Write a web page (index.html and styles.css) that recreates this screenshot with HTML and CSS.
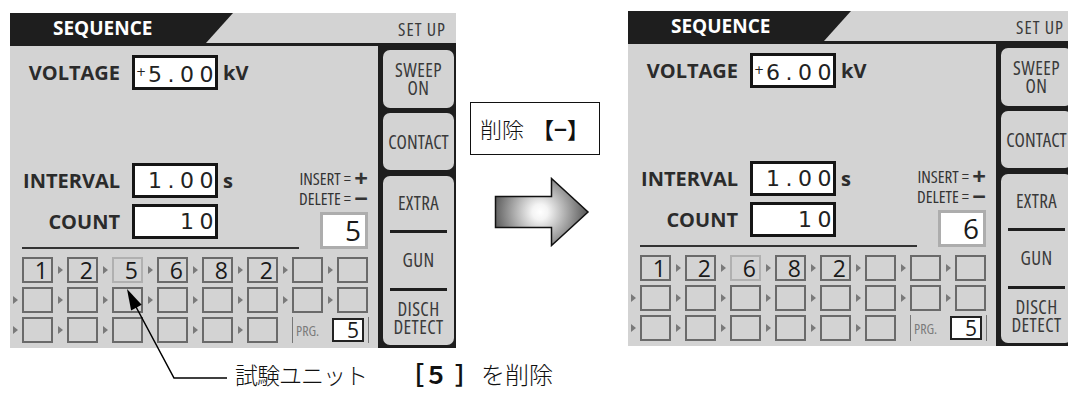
FILE: index.html
```html
<!DOCTYPE html>
<html lang="ja">
<head>
  <meta charset="UTF-8">
  <title>SEQUENCE - 削除</title>
  <link rel="stylesheet" href="styles.css">
</head>
<body>
  <div class="figure">
    <div class="row">

      <!-- Before -->
      <div class="panel">
        <div class="panel-head">
          <div class="tab">SEQUENCE</div>
          <div class="setup">SET UP</div>
        </div>
        <div class="panel-body">
          <div class="main">
            <div class="field">
              <span class="label">VOLTAGE</span>
              <span class="value"><span class="digits"><span class="sign">+</span>5.00</span></span>
              <span class="unit">kV</span>
            </div>
            <div class="middle-block">
              <div class="settings">
                <div class="field">
                  <span class="label">INTERVAL</span>
                  <span class="value"><span class="digits">1.00</span></span>
                  <span class="unit">s</span>
                </div>
                <div class="field">
                  <span class="label">COUNT</span>
                  <span class="value"><span class="digits">10</span></span>
                </div>
              </div>
              <div class="editor">
                <div class="hint">INSERT = <b>+</b></div>
                <div class="hint">DELETE = <b>&minus;</b></div>
                <div class="count">5</div>
              </div>
            </div>
            <div class="steps">
              <div class="step-row">
                <span class="arrow hidden"></span><span class="cell">1</span>
                <span class="arrow"></span><span class="cell">2</span>
                <span class="arrow"></span><span class="cell removed">5</span>
                <span class="arrow"></span><span class="cell">6</span>
                <span class="arrow"></span><span class="cell">8</span>
                <span class="arrow"></span><span class="cell">2</span>
                <span class="arrow"></span><span class="cell"></span>
                <span class="arrow"></span><span class="cell"></span>
              </div>
              <div class="step-row">
                <span class="arrow"></span><span class="cell"></span>
                <span class="arrow"></span><span class="cell"></span>
                <span class="arrow"></span><span class="cell"></span>
                <span class="arrow"></span><span class="cell"></span>
                <span class="arrow"></span><span class="cell"></span>
                <span class="arrow"></span><span class="cell"></span>
                <span class="arrow"></span><span class="cell"></span>
                <span class="arrow"></span><span class="cell"></span>
              </div>
              <div class="step-row">
                <span class="arrow"></span><span class="cell"></span>
                <span class="arrow"></span><span class="cell"></span>
                <span class="arrow"></span><span class="cell"></span>
                <span class="arrow hidden"></span><span class="cell"></span>
                <span class="arrow"></span><span class="cell"></span>
                <span class="arrow"></span><span class="cell"></span>
                <span class="arrow hidden"></span>
                <div class="prg"><span class="prg-label">PRG.</span><span class="prg-box">5</span></div>
              </div>
            </div>
          </div>
          <div class="side">
            <div class="key key-sweep">SWEEP<br>ON</div>
            <div class="key key-contact">CONTACT</div>
            <div class="key key-group">
              <div class="part">EXTRA</div>
              <div class="part">GUN</div>
              <div class="part">DISCH<br>DETECT</div>
            </div>
          </div>
        </div>
      </div>

      <!-- Operation -->
      <div class="middle">
        <div class="op-label">削除<b>【&minus;】</b></div>
        <svg class="shift-arrow" width="96" height="70" viewBox="0 0 96 70">
          <defs>
            <radialGradient id="sheen" cx="46" cy="35" r="52" gradientUnits="userSpaceOnUse">
              <stop offset="0" stop-color="#ffffff"/>
              <stop offset="0.15" stop-color="#f4f4f4"/>
              <stop offset="1" stop-color="#454545"/>
            </radialGradient>
          </defs>
          <path d="M1.5 19.5 H57.5 V1.5 L94 35 L57.5 68.5 V50.5 H1.5 Z" fill="url(#sheen)" stroke="#111" stroke-width="1.5"/>
        </svg>
      </div>

      <!-- After -->
      <div class="panel panel-after">
        <div class="panel-head">
          <div class="tab">SEQUENCE</div>
          <div class="setup">SET UP</div>
        </div>
        <div class="panel-body">
          <div class="main">
            <div class="field">
              <span class="label">VOLTAGE</span>
              <span class="value"><span class="digits"><span class="sign">+</span>6.00</span></span>
              <span class="unit">kV</span>
            </div>
            <div class="middle-block">
              <div class="settings">
                <div class="field">
                  <span class="label">INTERVAL</span>
                  <span class="value"><span class="digits">1.00</span></span>
                  <span class="unit">s</span>
                </div>
                <div class="field">
                  <span class="label">COUNT</span>
                  <span class="value"><span class="digits">10</span></span>
                </div>
              </div>
              <div class="editor">
                <div class="hint">INSERT = <b>+</b></div>
                <div class="hint">DELETE = <b>&minus;</b></div>
                <div class="count">6</div>
              </div>
            </div>
            <div class="steps">
              <div class="step-row">
                <span class="arrow hidden"></span><span class="cell">1</span>
                <span class="arrow"></span><span class="cell">2</span>
                <span class="arrow"></span><span class="cell removed">6</span>
                <span class="arrow"></span><span class="cell">8</span>
                <span class="arrow"></span><span class="cell">2</span>
                <span class="arrow"></span><span class="cell"></span>
                <span class="arrow"></span><span class="cell"></span>
                <span class="arrow"></span><span class="cell"></span>
              </div>
              <div class="step-row">
                <span class="arrow"></span><span class="cell"></span>
                <span class="arrow"></span><span class="cell"></span>
                <span class="arrow"></span><span class="cell"></span>
                <span class="arrow"></span><span class="cell"></span>
                <span class="arrow"></span><span class="cell"></span>
                <span class="arrow"></span><span class="cell"></span>
                <span class="arrow"></span><span class="cell"></span>
                <span class="arrow"></span><span class="cell"></span>
              </div>
              <div class="step-row">
                <span class="arrow"></span><span class="cell"></span>
                <span class="arrow"></span><span class="cell"></span>
                <span class="arrow"></span><span class="cell"></span>
                <span class="arrow"></span><span class="cell"></span>
                <span class="arrow"></span><span class="cell"></span>
                <span class="arrow"></span><span class="cell"></span>
                <span class="arrow hidden"></span>
                <div class="prg"><span class="prg-label">PRG.</span><span class="prg-box">5</span></div>
              </div>
            </div>
          </div>
          <div class="side">
            <div class="key key-sweep">SWEEP<br>ON</div>
            <div class="key key-contact">CONTACT</div>
            <div class="key key-group">
              <div class="part">EXTRA</div>
              <div class="part">GUN</div>
              <div class="part">DISCH<br>DETECT</div>
            </div>
          </div>
        </div>
      </div>
    </div>

    <div class="caption"><span class="lead">試験ユニット</span><b>［<span class="n">５</span>］</b>を削除</div>

    <!-- leader from the caption to the removed step -->
    <svg class="leader" width="1068" height="394" viewBox="0 0 1068 394">
      <polyline points="227,378 174,378 135,305" fill="none" stroke="#000" stroke-width="1.5"/>
      <polygon points="127,289 141.7,304.8 131.1,310.4" fill="#000"/>
    </svg>
  </div>
</body>
</html>
```

FILE: styles.css
```css
* {
  box-sizing: border-box;
}
body {
  margin: 0;
  width: 1068px;
  height: 394px;
  overflow: hidden;
  background: #fff;
  font-family: "Open Sans", sans-serif;
  color: #2b2b2b;
}
.figure {
  position: relative;
  width: 1068px;
  height: 394px;
}
.row {
  display: flex;
  align-items: flex-start;
}

/* panel */
.panel {
  flex: none;
  width: 446px;
  height: 335px;
  margin: 13px 0 0 10px;
  background: #d3d3d3;
  display: flex;
  flex-direction: column;
}
.panel-after {
  margin: 11px 0 0 0;
}
.panel-head {
  height: 33px;
  display: flex;
  border-bottom: 3px solid #1e1e1e;
}
.tab {
  width: 223px;
  padding-left: 43px;
  background: #1e1e1e;
  clip-path: polygon(0 0, 100% 0, calc(100% - 27px) 100%, 0 100%);
  color: #fff;
  font-weight: 700;
  font-size: 19px;
  line-height: 31px;
}
.setup {
  margin-left: auto;
  padding-right: 10px;
  font-size: 18px;
  line-height: 33px;
  letter-spacing: 1px;
  color: #3a3a3a;
  font-stretch: 87.5%;
}
.panel-body {
  flex: 1;
  display: flex;
}
.main {
  flex: none;
  width: 368px;
  padding-top: 9px;
}

/* fields */
.field {
  display: flex;
  align-items: center;
  height: 35px;
}
.label {
  width: 110px;
  margin-right: 12px;
  text-align: right;
  font-weight: 700;
  font-size: 20px;
  color: #2b2b2b;
}
.settings .label {
  width: 98px;
}
.value {
  flex: none;
  width: 86px;
  height: 35px;
  padding-right: 2px;
  background: #fff;
  border: 3px solid #151515;
  text-align: right;
  font-family: "DejaVu Sans", sans-serif;
  font-size: 22px;
  line-height: 29px;
  letter-spacing: 5.5px;
  color: #222;
  white-space: nowrap;
}
.digits {
  margin-right: -6px;
}
.sign {
  font-size: 12px;
  vertical-align: 6px;
  letter-spacing: 2px;
}
.unit {
  margin-left: 5px;
  font-weight: 700;
  font-size: 20px;
}

.middle-block {
  display: flex;
  align-items: flex-end;
  margin-top: 73px;
}
.settings {
  width: 285px;
  margin-left: 12px;
  padding-bottom: 8px;
  border-bottom: 2px solid #333;
  display: flex;
  flex-direction: column;
  gap: 6px;
}
.editor {
  flex: 1;
  display: flex;
  flex-direction: column;
  align-items: flex-end;
  padding-right: 10px;
}
.hint {
  height: 20px;
  white-space: nowrap;
  font-size: 17px;
  line-height: 20px;
  color: #333;
  font-stretch: 87.5%;
}
.hint b {
  font-size: 24px;
  line-height: 0;
  vertical-align: -2px;
  font-stretch: 100%;
}
.count {
  width: 48px;
  height: 37px;
  margin-top: 3px;
  padding-right: 4px;
  background: #fff;
  border: 3px solid #adadad;
  text-align: right;
  font-size: 28px;
  line-height: 30px;
  color: #1a1a1a;
}

/* step grid */
.steps {
  margin-top: 8px;
  display: flex;
  flex-direction: column;
  gap: 4px;
}
.step-row {
  display: flex;
  height: 26px;
  margin-left: -2px;
}
.arrow {
  flex: none;
  width: 14px;
  display: flex;
  align-items: center;
  justify-content: center;
}
.arrow::before {
  content: "";
  border-left: 5px solid #7a7a7a;
  border-top: 4px solid transparent;
  border-bottom: 4px solid transparent;
}
.arrow.hidden::before {
  visibility: hidden;
}
.cell {
  flex: none;
  width: 31px;
  height: 26px;
  padding-right: 3px;
  border: 2px solid #6a6a6a;
  text-align: right;
  font-size: 23px;
  line-height: 22px;
  color: #1a1a1a;
}
.cell.removed {
  border-color: #b0b0b0;
}
.prg {
  flex: none;
  width: 77px;
  height: 26px;
  padding: 1px 4px 1px 3px;
  border-left: 1px solid #777;
  border-right: 1px solid #777;
  display: flex;
  align-items: center;
}
.prg-label {
  font-size: 14px;
  color: #7a7a7a;
  font-stretch: 80%;
}
.prg-box {
  margin-left: auto;
  width: 32px;
  height: 24px;
  padding-right: 3px;
  background: #fff;
  border: 2px solid #222;
  text-align: right;
  font-size: 21px;
  line-height: 20px;
  color: #1a1a1a;
}

/* right keys */
.side {
  flex: none;
  width: 78px;
  padding: 4px 2px 3px 5px;
  background: #1e1e1e;
  display: flex;
  flex-direction: column;
  gap: 5px;
}
.key {
  background: #d3d3d3;
  border-radius: 7px;
  display: flex;
  flex-direction: column;
  align-items: center;
  justify-content: center;
  text-align: center;
  font-size: 19px;
  line-height: 18px;
  letter-spacing: 0.4px;
  color: #3a3a3a;
  font-stretch: 87.5%;
  white-space: nowrap;
}
.key-sweep {
  height: 58px;
}
.key-contact {
  height: 57px;
  margin-bottom: 1px;
  letter-spacing: 0;
}
.key-group {
  flex: 1;
  align-items: stretch;
}
.key-group .part {
  flex: 1;
  margin: 0 7px;
  display: flex;
  align-items: center;
  justify-content: center;
}
.key-group .part + .part {
  border-top: 3px solid #1e1e1e;
}

/* operation in the middle */
.middle {
  flex: none;
  width: 172px;
  padding-top: 102px;
  display: flex;
  flex-direction: column;
}
.op-label {
  width: 130px;
  height: 53px;
  margin-left: 14px;
  padding-left: 9px;
  border: 1.5px solid #111;
  font-family: "Noto Sans CJK JP", sans-serif;
  font-weight: 300;
  font-size: 22px;
  line-height: 50px;
  color: #111;
  white-space: nowrap;
}
.op-label b {
  margin-left: 8px;
  font-weight: 700;
}
.shift-arrow {
  display: block;
  margin: 22px 0 0 38px;
}

.caption {
  margin-top: 13px;
  padding-left: 235px;
  font-family: "Noto Sans CJK JP", sans-serif;
  font-weight: 300;
  font-size: 24px;
  line-height: 26px;
  color: #111;
  white-space: nowrap;
}
.caption .lead {
  font-size: 23px;
  letter-spacing: -1px;
}
.caption b {
  margin: 0 2px 0 33px;
  font-weight: 700;
}
.caption .n {
  margin-right: 7px;
}
.leader {
  position: absolute;
  top: 0;
  left: 0;
  pointer-events: none;
}
```
